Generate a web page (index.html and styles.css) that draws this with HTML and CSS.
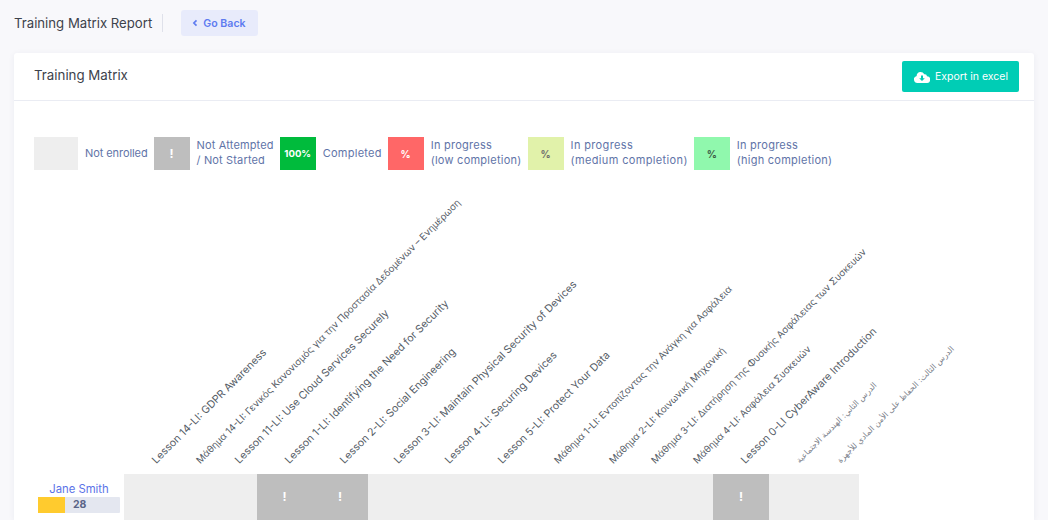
FILE: index.html
```html
<!DOCTYPE html>
<html lang="en">
<head>
<meta charset="utf-8">
<title>Training Matrix Report</title>
<link rel="stylesheet" href="styles.css">
</head>
<body>
<header class="topbar">
  <h1 class="page-title">Training Matrix Report</h1>
  <a class="back-btn" href="#"><svg class="back-icon" viewBox="0 0 8 10" width="6" height="8"><path d="M6 1.500 2.500 5 6 8.500" fill="none" stroke="currentColor" stroke-width="2.200"/></svg>Go Back</a>
</header>
<main class="card">
  <div class="card-head">
    <h2 class="card-title">Training Matrix</h2>
    <a class="export-btn" href="#"><svg class="cloud" viewBox="0 0 16 12" width="16" height="12"><path fill-rule="evenodd" d="M3.600 12A3.600 3.600 0 0 1 2.700 4.900 3.600 3.600 0 0 1 6.300 1a4.300 4.300 0 0 1 4 2.200A2.300 2.300 0 0 1 13 5.200 3.400 3.400 0 0 1 12.600 12ZM7 4.500V7.200H5.200L8 10l2.800-2.800H9V4.500Z" fill="#fff"/></svg>Export in excel</a>
  </div>
  <div class="card-body">
    <div class="legend">
      <span class="swatch swatch-wide s-none"></span><span class="legend-text legend-tight">Not enrolled</span>
      <span class="swatch s-idle">!</span><span class="legend-text legend-two legend-mid">Not Attempted<br>/ Not Started</span>
      <span class="swatch s-done">100%</span><span class="legend-text legend-wide">Completed</span>
      <span class="swatch s-low">%</span><span class="legend-text legend-two legend-wide">In progress<br>(low completion)</span>
      <span class="swatch s-mid">%</span><span class="legend-text legend-two legend-wider">In progress<br>(medium completion)</span>
      <span class="swatch s-high">%</span><span class="legend-text legend-two legend-wide">In progress<br>(high completion)</span>
    </div>
    <div class="matrix">
      <div class="corner"></div>
      <div class="col-head"><span class="col-label">Lesson 14-LI: GDPR Awareness</span></div>
      <div class="col-head"><span class="col-label col-label-el">Μάθημα 14-LI: Γενικός Κανονισμός για την Προστασία Δεδομένων – Ενημέρωση</span></div>
      <div class="col-head"><span class="col-label">Lesson 11-LI: Use Cloud Services Securely</span></div>
      <div class="col-head"><span class="col-label">Lesson 1-LI: Identifying the Need for Security</span></div>
      <div class="col-head"><span class="col-label">Lesson 2-LI: Social Engineering</span></div>
      <div class="col-head"><span class="col-label">Lesson 3-LI: Maintain Physical Security of Devices</span></div>
      <div class="col-head"><span class="col-label">Lesson 4-LI: Securing Devices</span></div>
      <div class="col-head"><span class="col-label">Lesson 5-LI: Protect Your Data</span></div>
      <div class="col-head"><span class="col-label col-label-el">Μάθημα 1-LI: Εντοπίζοντας την Ανάγκη για Ασφάλεια</span></div>
      <div class="col-head"><span class="col-label col-label-el">Μάθημα 2-LI: Κοινωνική Μηχανική</span></div>
      <div class="col-head"><span class="col-label col-label-el col-label-nudge">Μάθημα 3-LI: Διατήρηση της Φυσικής Ασφάλειας των Συσκευών</span></div>
      <div class="col-head"><span class="col-label col-label-el">Μάθημα 4-LI: Ασφάλεια Συσκευών</span></div>
      <div class="col-head"><span class="col-label">Lesson 0-LI CyberAware Introduction</span></div>
      <div class="col-head"><span class="col-label col-label-ar" dir="rtl">الدرس الثاني: الهندسة الاجتماعية</span></div>
      <div class="col-head"><span class="col-label col-label-ar col-label-nudge" dir="rtl">الدرس الثالث: الحفاظ على الأمن المادي للأجهزة</span></div>

      <div class="user">
        <a class="user-name" href="#">Jane Smith</a>
        <div class="user-bar"><span class="user-fill"></span><span class="user-score">28</span></div>
      </div>
      <div class="cell"></div><div class="cell"></div><div class="cell"></div>
      <div class="cell cell-idle">!</div><div class="cell cell-idle">!</div>
      <div class="cell"></div><div class="cell"></div><div class="cell"></div>
      <div class="cell"></div><div class="cell"></div><div class="cell"></div><div class="cell"></div>
      <div class="cell cell-idle">!</div>
      <div class="cell"></div><div class="cell"></div>
    </div>
  </div>
</main>
</body>
</html>
```
FILE: styles.css
```css
* { box-sizing: border-box; }
html, body { margin: 0; height: 520px; overflow: hidden; }
body {
  background: #f8f8fb;
  font-family: "Inter", "Noto Sans", "DejaVu Sans", sans-serif;
  color: #495057;
  padding: 10px 14px 0;
}
.topbar { display: flex; align-items: center; height: 26px; margin-bottom: 17px; }
.page-title {
  margin: 0;
  padding-right: 10px;
  border-right: 1px solid #dfe1ea;
  font-size: 13.200px;
  line-height: 18px;
  font-weight: 400;
  color: #3d424b;
}
.back-btn {
  display: flex;
  align-items: center;
  gap: 5px;
  height: 26px;
  margin-left: 18px;
  padding: 0 12px 0 11px;
  border-radius: 3px;
  background: #e8ebfb;
  color: #5e7bf0;
  font-size: 10.600px;
  font-weight: 600;
  text-decoration: none;
}
.card {
  height: 467px;
  overflow: hidden;
  background: #fff;
  border-radius: 3px 3px 0 0;
  box-shadow: 0 1px 6px rgba(40, 50, 90, .06);
}
.card-head {
  display: flex;
  align-items: center;
  justify-content: space-between;
  height: 48px;
  padding: 0 15px 0 20px;
  border-bottom: 1px solid #eaecf3;
}
.card-title { margin: 0 0 3px; font-size: 13.300px; font-weight: 400; color: #3d424b; }
.export-btn {
  display: flex;
  align-items: center;
  gap: 5px;
  height: 31px;
  padding: 0 11px 0 12px;
  border-radius: 2px;
  background: #00cdb5;
  color: #fff;
  font-size: 10.500px;
  font-weight: 400;
  text-decoration: none;
}
.card-body { padding: 36px 0 0 20px; }
.legend { display: flex; align-items: center; height: 33px; }
.swatch {
  display: flex;
  flex: none;
  align-items: center;
  justify-content: center;
  width: 36px;
  height: 33px;
  font-size: 10px;
  font-weight: 700;
  color: #fff;
}
.swatch-wide { width: 44px; }
.s-none { background: #eeeeee; }
.s-idle { background: #bebebe; font-size: 12px; }
.s-done { background: #00bb3c; font-size: 9.600px; }
.s-low { background: #ff6767; }
.s-mid { background: #e1f2aa; color: #6d6d6d; }
.s-high { background: #90f8ad; color: #3c5a46; }
.legend-text {
  padding: 0 6px 0 7px;
  font-size: 11px;
  line-height: 15px;
  color: #5f74a8;
  white-space: nowrap;
}
.legend-two { padding-bottom: 2px; }
.legend-tight { letter-spacing: -.08px; }
.legend-mid { letter-spacing: .15px; }
.legend-wide { letter-spacing: .25px; }
.legend-wider { letter-spacing: .36px; }
.matrix {
  display: grid;
  grid-template-columns: 90px 55px 34px 44px 55px 56px 52px 50px 56px 55px 56px 36px 40px 56px 54px 36px;
  grid-template-rows: 304px 46px;
}
.col-head { position: relative; }
.col-label {
  position: absolute;
  left: calc(50% + 7px);
  bottom: 7px;
  font-size: 10.600px;
  line-height: 14px;
  white-space: nowrap;
  color: #555c66;
  transform-origin: 0 100%;
  transform: rotate(-45deg);
}
.col-label-el { font-size: 9.600px; }
.col-label-ar { font-family: "DejaVu Sans", sans-serif; font-size: 8px; color: #7a808a; }
.col-label-nudge { margin-left: -4px; }
.user { display: flex; flex-direction: column; align-items: center; padding: 8px 4px 0 4px; }
.user-name { font-size: 11.300px; line-height: 14px; color: #5b73e8; text-decoration: none; }
.user-bar { display: flex; width: 82px; height: 16px; margin-top: 1px; border-radius: 1px; background: #e4e7f0; }
.user-fill { width: 27px; background: #ffcb2e; }
.user-score { padding-left: 8px; font-size: 10.500px; line-height: 16px; font-weight: 700; color: #5a6488; }
.cell { background: #eeeeee; }
.cell-idle {
  display: flex;
  align-items: center;
  justify-content: center;
  padding-bottom: 2px;
  background: #bebebe;
  color: #fff;
  font-size: 12px;
  font-weight: 700;
}
```
